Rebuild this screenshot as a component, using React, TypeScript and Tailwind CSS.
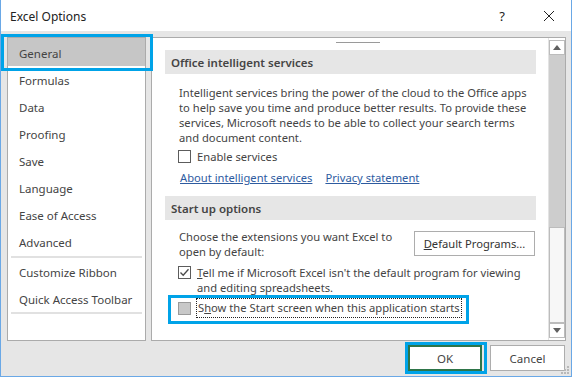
import React from "react";

const navTop = ["General", "Formulas", "Data", "Proofing", "Save", "Language", "Ease of Access", "Advanced"];
const navBottom = ["Customize Ribbon", "Quick Access Toolbar"];

function Box({ kind }: { kind: "empty" | "checked" | "gray" }) {
  if (kind === "gray") {
    return <span className="block h-[13px] w-[13px] shrink-0 border border-[#9a9a9a] bg-[#c8c8c8]" />;
  }
  return (
    <span className="flex h-[13px] w-[13px] shrink-0 items-center justify-center border border-[#5c5c5c] bg-white">
      {kind === "checked" && (
        <svg width="11" height="11" viewBox="0 0 11 11">
          <path d="M1.5 5.5 L4.2 8.3 L9.5 2.2" fill="none" stroke="#4a4a4a" strokeWidth="1.3" />
        </svg>
      )}
    </span>
  );
}

function SectionHead({ children }: { children: React.ReactNode }) {
  return (
    <div className="ml-[13px] mr-[12px] flex h-[24px] items-center bg-[#e6e6e6] pl-[6px] text-[11.5px] font-semibold text-[#444]">
      {children}
    </div>
  );
}

export default function App() {
  return (
    <div className="relative flex h-[377px] w-[572px] flex-col whitespace-nowrap border-x border-b border-[#6aa8e6] bg-white font-['Noto_Sans',sans-serif] text-[11.5px] leading-[15px] text-[#444]">
      {/* title bar */}
      <div className="flex h-[31px] shrink-0 items-center bg-white pl-[9px] pt-[1px] text-[12px] text-[#222]">
        <span className="flex-1">Excel Options</span>
        <span className="mr-[38px] text-[13px]">?</span>
        <svg className="mr-[16px]" width="12" height="12" viewBox="0 0 12 12">
          <path d="M1 1 L11 11 M11 1 L1 11" stroke="#222" strokeWidth="1" />
        </svg>
      </div>

      {/* body */}
      <div className="flex flex-1 flex-col bg-[#e6e6e6] pl-[6px] pr-[5px] pt-[6px]">
        <div className="flex h-[304px] gap-[5px]">
          {/* nav */}
          <div className="flex w-[139px] flex-col border border-[#ababab] bg-white">
            {navTop.map((n, i) => (
              <div
                key={n}
                className={`flex items-center pl-[11px] pt-[2px] ${i === 0 ? "h-[28px] bg-[#c6c6c6]" : "h-[27px]"}`}
              >
                {n}
              </div>
            ))}
            <div className="mx-[3px] mt-[1px] h-[2px] bg-[#e1e1e1]" />
            {navBottom.map((n) => (
              <div key={n} className="flex h-[27px] items-center pl-[11px] pt-[2px]">
                {n}
              </div>
            ))}
            <div className="mx-[3px] h-[2px] bg-[#e1e1e1]" />
          </div>

          {/* content panel */}
          <div className="flex w-[415px] border border-[#ababab] bg-white text-[11.2px]">
            <div className="flex flex-1 flex-col">
              <div className="ml-[184px] mt-[4px] h-[1px] w-[44px] bg-[#9a9a9a]" />
              <div className="mt-[7px]">
                <SectionHead>Office intelligent services</SectionHead>
              </div>
              <p className="ml-[27px] mt-[11px]">
                Intelligent services bring the power of the cloud to the Office apps
                <br />
                to help save you time and produce better results. To provide these
                <br />
                services, Microsoft needs to be able to collect your search terms
                <br />
                and document content.
              </p>
              <label className="ml-[26px] mt-[4px] flex items-center gap-[6px]">
                <Box kind="empty" />
                <span>Enable services</span>
              </label>
              <div className="ml-[28px] mt-[6px] flex gap-[13px] text-[#2e5b9f] underline">
                <span>About intelligent services</span>
                <span>Privacy statement</span>
              </div>
              <div className="mt-[11px]">
                <SectionHead>Start up options</SectionHead>
              </div>
              <div className="ml-[27px] mr-[13px] mt-[9px] flex items-start justify-between">
                <p>
                  Choose the extensions you want Excel to
                  <br />
                  open by default:
                </p>
                <button className="mt-[2px] flex h-[25px] w-[121px] items-center justify-center border border-[#adadad] bg-white text-[#333]">
                  <span>
                    <span className="underline">D</span>efault Programs...
                  </span>
                </button>
              </div>
              <div className="ml-[26px] mt-[6px] flex items-start gap-[6px]">
                <span className="mt-[1px]">
                  <Box kind="checked" />
                </span>
                <p>
                  <span className="underline">T</span>ell me if Microsoft Excel isn&apos;t the default program for viewing
                  <br />
                  and editing spreadsheets.
                </p>
              </div>
              <div className="ml-[26px] mt-[3px] flex items-center gap-[5px]">
                <Box kind="gray" />
                <span className="border border-dotted border-[#222] px-[1px] py-[2px] leading-[14px]">
                  S<span className="underline">h</span>ow the Start screen when this application starts
                </span>
              </div>
            </div>

            {/* scrollbar */}
            <div className="flex w-[17px] flex-col border-l border-[#e3e3e3] bg-white pb-[2px] pt-[2px]">
              <div className="flex h-[15px] items-center justify-center border border-[#bcbcbc] bg-white">
                <svg width="8" height="5" viewBox="0 0 8 5">
                  <path d="M0 5 L4 0 L8 5 Z" fill="#606060" />
                </svg>
              </div>
              <div className="flex-1 bg-[#cdcdcd]" />
              <div className="h-[96px] border border-[#bcbcbc] bg-[#f7f7f7]" />
              <div className="flex h-[15px] items-center justify-center border border-[#bcbcbc] bg-white">
                <svg width="8" height="5" viewBox="0 0 8 5">
                  <path d="M0 0 L8 0 L4 5 Z" fill="#606060" />
                </svg>
              </div>
            </div>
          </div>
        </div>

        {/* buttons */}
        <div className="mt-[4px] flex justify-end gap-[8px] pr-[1px]">
          <button className="flex h-[26px] w-[74px] items-center justify-center border-2 border-[#2e7549] bg-white text-[#444]">
            OK
          </button>
          <button className="flex h-[26px] w-[75px] items-center justify-center border border-[#adadad] bg-white text-[#444]">
            Cancel
          </button>
        </div>
      </div>

      {/* resize grip */}
      <svg className="absolute bottom-[1px] right-[1px]" width="10" height="10" viewBox="0 0 10 10">
        {[
          [8, 2],
          [8, 5],
          [5, 5],
          [8, 8],
          [5, 8],
          [2, 8],
        ].map(([x, y]) => (
          <rect key={`${x}-${y}`} x={x - 1} y={y - 1} width="2" height="2" fill="#b8b8b8" />
        ))}
      </svg>

      {/* annotation highlights */}
      <div className="pointer-events-none absolute left-[0px] top-[34px] h-[37px] w-[152px] border-[3px] border-[#00a3e8]" />
      <div className="pointer-events-none absolute left-[167px] top-[295px] h-[29px] w-[301px] border-[3px] border-[#00a3e8]" />
      <div className="pointer-events-none absolute left-[404px] top-[342px] h-[32px] w-[82px] border-[3px] border-[#00a3e8]" />
    </div>
  );
}
